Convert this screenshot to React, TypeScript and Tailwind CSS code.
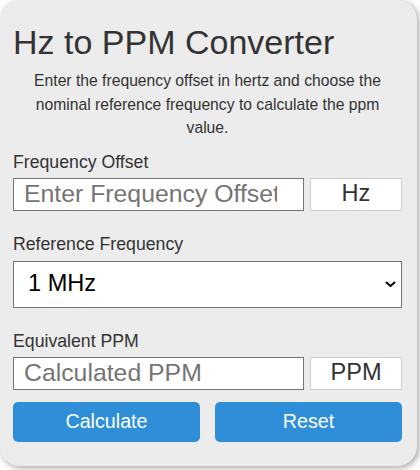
import React from "react";

export default function App() {
  return (
    <div className="w-[420px] h-[470px] bg-white" style={{ fontFamily: '"Liberation Sans", Arial, sans-serif' }}>
      <div className="w-[417px] rounded-[20px] bg-[#ececec] shadow-[2px_2px_6px_rgba(0,0,0,0.35)] pl-[13px] pr-[15px] pt-[23px] pb-[24px] flex flex-col">
        <h1 className="text-[34px] leading-[38px] text-[#333] font-normal m-0">Hz to PPM Converter</h1>
        <p className="mt-[8px] text-[15.7px] leading-[23.5px] text-[#333] text-center px-[8px]">
          Enter the frequency offset in hertz and choose the nominal reference frequency to calculate the ppm value.
        </p>
        <label className="mt-[12px] text-[17.7px] leading-[20px] text-[#333]">Frequency Offset</label>
        <div className="mt-[6px] flex gap-[6px] h-[33px]">
          <input
            type="text"
            placeholder="Enter Frequency Offset"
            className="w-[291px] h-full bg-white border border-[#767676] pl-[10px] pr-[26px] text-[24.8px] text-[#333] placeholder:text-[#757575] outline-none"
            style={{ fontFamily: '"Liberation Sans", Arial, sans-serif' }}
          />
          <div className="w-[92px] h-full bg-white border border-[#cccccc] flex items-center justify-center text-[23.6px] text-[#333]">
            Hz
          </div>
        </div>
        <label className="mt-[23px] text-[17.7px] leading-[20px] text-[#333]">Reference Frequency</label>
        <div className="mt-[7px] relative h-[47px]">
          <select
            className="appearance-none w-full h-full bg-white border border-[#767676] pl-[14px] text-[23.6px] text-black outline-none rounded-none"
            style={{ fontFamily: '"Liberation Sans", Arial, sans-serif' }}
            defaultValue="1000000"
          >
            <option value="1000000">1 MHz</option>
            <option value="10000000">10 MHz</option>
            <option value="100000000">100 MHz</option>
          </select>
          <svg
            className="absolute right-[6px] top-[20px] pointer-events-none"
            width="11"
            height="7"
            viewBox="0 0 11 7"
          >
            <path d="M1.5 1.5 L5.5 5 L9.5 1.5" fill="none" stroke="#000" strokeWidth="2" strokeLinecap="round" strokeLinejoin="round" />
          </svg>
        </div>
        <label className="mt-[23px] text-[17.7px] leading-[20px] text-[#333]">Equivalent PPM</label>
        <div className="mt-[6px] flex gap-[6px] h-[33px]">
          <input
            type="text"
            readOnly
            placeholder="Calculated PPM"
            className="w-[291px] h-full bg-white border border-[#767676] pl-[10px] pr-[26px] text-[24.8px] text-[#333] placeholder:text-[#757575] outline-none"
            style={{ fontFamily: '"Liberation Sans", Arial, sans-serif' }}
          />
          <div className="w-[92px] h-full bg-white border border-[#cccccc] flex items-center justify-center text-[23.6px] text-[#333]">
            PPM
          </div>
        </div>
        <div className="mt-[12px] grid grid-cols-2 gap-[15px]">
          <button className="h-[40px] rounded-[5px] bg-[#2e8fd8] text-white text-[19.7px]" style={{ fontFamily: '"Liberation Sans", Arial, sans-serif' }}>
            Calculate
          </button>
          <button className="h-[40px] rounded-[5px] bg-[#2e8fd8] text-white text-[19.7px]" style={{ fontFamily: '"Liberation Sans", Arial, sans-serif' }}>
            Reset
          </button>
        </div>
      </div>
    </div>
  );
}
